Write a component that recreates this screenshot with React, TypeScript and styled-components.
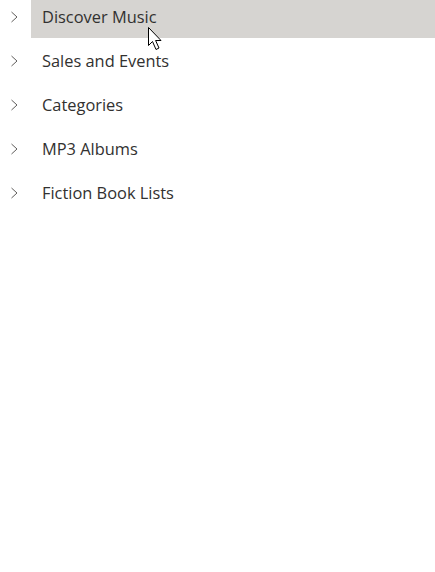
import React from "react";
import styled, { createGlobalStyle } from "styled-components";

const Global = createGlobalStyle`
  html, body { margin: 0; padding: 0; background: #ffffff; }
  body { font-family: "Open Sans", "Noto Sans", sans-serif; overflow: hidden; }
`;

const Page = styled.div`
  position: relative;
  width: 435px;
  height: 572px;
  overflow: hidden;
  background: #ffffff;
`;

const List = styled.ul`
  list-style: none;
  margin: -5px 0 0 0;
  padding: 0;
  display: flex;
  flex-direction: column;
`;

const Row = styled.li`
  display: flex;
  align-items: center;
  height: 44px;
`;

const Chevron = styled.span`
  width: 31px;
  height: 44px;
  display: flex;
  align-items: center;
  justify-content: flex-start;
  padding-left: 10px;
  box-sizing: border-box;
  flex: none;
`;

const Label = styled.div<{ $active?: boolean }>`
  flex: 1;
  height: ${(p) => (p.$active ? "43px" : "44px")};
  align-self: flex-start;
  display: flex;
  align-items: center;
  padding-left: 11px;
  padding-bottom: 1px;
  box-sizing: border-box;
  font-size: 16.4px;
  color: #323130;
  background: ${(p) => (p.$active ? "#d6d4d1" : "transparent")};
`;

const Cursor = styled.svg`
  position: absolute;
  left: 148px;
  top: 27px;
  pointer-events: none;
`;

const items = ["Discover Music", "Sales and Events", "Categories", "MP3 Albums", "Fiction Book Lists"];

export default function App() {
  return (
    <Page>
      <Global />
      <List>
        {items.map((t, i) => (
          <Row key={t}>
            <Chevron>
              <svg width="9" height="12" viewBox="0 0 9 12">
                <path d="M1.5 1 L7 6 L1.5 11" fill="none" stroke="#605e5c" strokeWidth="1" />
              </svg>
            </Chevron>
            <Label $active={i === 0}>{t}</Label>
          </Row>
        ))}
      </List>
      <Cursor width="18" height="26" viewBox="0 0 18 26">
        <path
          d="M0.5 0.5 L0.5 18.5 L4.5 14.5 L8 22.5 L11 21 L7.6 13.5 L13 13.5 Z"
          fill="#ffffff"
          stroke="#000000"
          strokeWidth="1"
          strokeLinejoin="miter"
        />
      </Cursor>
    </Page>
  );
}
